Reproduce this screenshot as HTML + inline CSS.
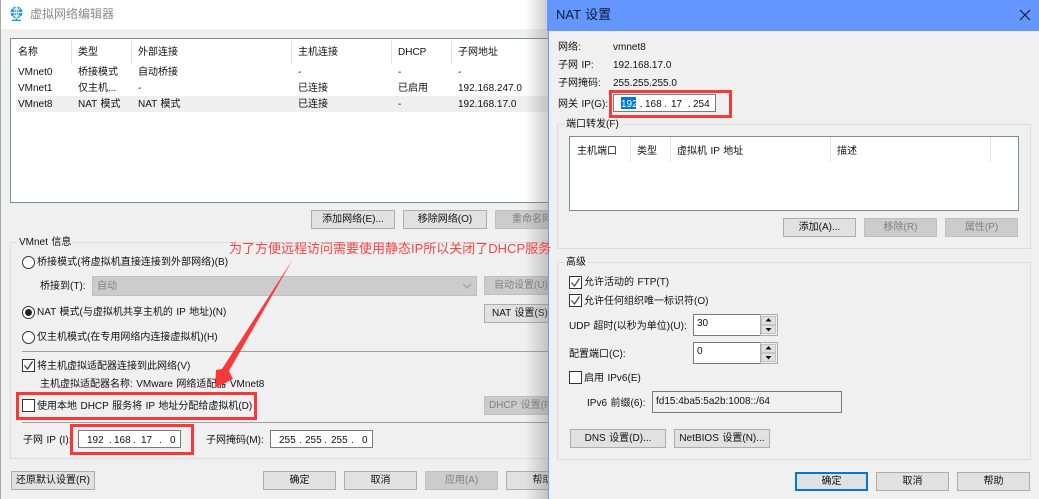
<!DOCTYPE html>
<html><head><meta charset="utf-8">
<style>
html,body{margin:0;padding:0;width:1039px;height:499px;overflow:hidden;background:#f0f0f0}
body{position:relative;font-family:"Liberation Sans","Noto Sans CJK SC",sans-serif;font-size:10px;color:#111;word-spacing:.7px}
#w{position:absolute;left:0;top:0;width:1039px;height:499px;filter:blur(.3px)}
div{position:absolute;box-sizing:border-box}
.t{white-space:nowrap;line-height:14px;height:14px;transform:translateY(-6px)}
.b{background:#e1e1e1;border:1px solid #adadad;text-align:center;white-space:nowrap;line-height:18px;height:19px}
.d{background:#ccc;border:1px solid #bfbfbf;color:#808080}
.i{background:#fff;border:1px solid #7a7a7a}
.c{width:13px;height:13px;background:#fff;border:1px solid #333}
.r{width:13px;height:13px;background:#fff;border:1px solid #333;border-radius:50%}
.o{border:3px solid #f63a3a}
.s{background:#a0a0a0;height:1px}
.gp{border:1px solid #dcdcdc}
.l{background:#f0f0f0;white-space:nowrap;line-height:14px;height:14px;padding:0 2px}
.v{width:1px;background:#e4e4e4}
</style></head><body><div id="w">

<!-- left dialog -->
<div style="left:0;top:0;width:548px;height:499px;background:#f0f0f0;border-left:1px solid #a8a8a8"></div>
<div style="left:1px;top:0;width:547px;height:29px;background:#fff"></div>
<svg style="position:absolute;left:9px;top:6px" width="15" height="15" viewBox="0 0 15 15">
<circle cx="7.5" cy="6.5" r="6" fill="#2e9bd6"/>
<path d="M1.5 6.5h12M7.5 .5v12M3.5 2.5q4 2 8 0M3.5 10.5q4-2 8 0M7.5 .5q-4 6 0 12M7.5 .5q4 6 0 12" stroke="#dff1fa" stroke-width=".9" fill="none"/>
<path d="M7.5 12.5v1.5M3 14.3h9" stroke="#3a9a8a" stroke-width="1.3"/>
</svg>
<div class="t" style="left:30px;top:13px;font-size:12px;color:#8a8a8a">虚拟网络编辑器</div>

<!-- table -->
<div style="left:10px;top:38px;width:540px;height:165px;background:#fff;border:1px solid #808a94"></div>
<div class="v" style="left:71px;top:40px;height:24px"></div>
<div class="v" style="left:131px;top:40px;height:24px"></div>
<div class="v" style="left:291px;top:40px;height:24px"></div>
<div class="v" style="left:391px;top:40px;height:24px"></div>
<div class="v" style="left:451px;top:40px;height:24px"></div>
<div style="left:16px;top:96px;width:532px;height:16px;background:#efefef"></div>
<div class="t" style="left:18px;top:52px">名称</div>
<div class="t" style="left:78px;top:52px">类型</div>
<div class="t" style="left:138px;top:52px">外部连接</div>
<div class="t" style="left:298px;top:52px">主机连接</div>
<div class="t" style="left:398px;top:52px">DHCP</div>
<div class="t" style="left:458px;top:52px">子网地址</div>

<div class="t" style="left:18px;top:72px">VMnet0</div>
<div class="t" style="left:78px;top:72px">桥接模式</div>
<div class="t" style="left:138px;top:72px">自动桥接</div>
<div class="t" style="left:298px;top:72px">-</div>
<div class="t" style="left:398px;top:72px">-</div>
<div class="t" style="left:458px;top:72px">-</div>

<div class="t" style="left:18px;top:88px">VMnet1</div>
<div class="t" style="left:78px;top:88px">仅主机...</div>
<div class="t" style="left:138px;top:88px">-</div>
<div class="t" style="left:298px;top:88px">已连接</div>
<div class="t" style="left:398px;top:88px">已启用</div>
<div class="t" style="left:458px;top:88px">192.168.247.0</div>

<div class="t" style="left:18px;top:104px">VMnet8</div>
<div class="t" style="left:78px;top:104px">NAT 模式</div>
<div class="t" style="left:138px;top:104px">NAT 模式</div>
<div class="t" style="left:298px;top:104px">已连接</div>
<div class="t" style="left:398px;top:104px">-</div>
<div class="t" style="left:458px;top:104px">192.168.17.0</div>

<div class="b" style="left:311px;top:210px;width:84px">添加网络(E)...</div>
<div class="b" style="left:403px;top:210px;width:84px">移除网络(O)</div>
<div class="b d" style="left:495px;top:210px;width:84px">重命名网络</div>

<!-- VMnet group -->
<div class="gp" style="left:10px;top:242px;width:560px;height:217px"></div>
<div class="l" style="left:17px;top:236px">VMnet 信息</div>

<div class="r" style="left:22px;top:256px"></div>
<div class="t" style="left:37px;top:262px;letter-spacing:.05px">桥接模式(将虚拟机直接连接到外部网络)(B)</div>
<div class="t" style="left:40px;top:286px">桥接到(T):</div>
<div style="left:92px;top:276px;width:385px;height:20px;background:#ccc;border:1px solid #bfbfbf"></div>
<div class="t" style="left:97px;top:286px;color:#808080">自动</div>
<svg style="position:absolute;left:462px;top:283px" width="10" height="6"><path d="M1 1l4 4 4-4" stroke="#999" fill="none"/></svg>
<div class="b d" style="left:484px;top:276px;width:84px;text-align:left;padding-left:9px">自动设置(U)</div>

<div class="r" style="left:22px;top:306px"></div>
<div style="left:25px;top:309px;width:7px;height:7px;border-radius:50%;background:#222"></div>
<div class="t" style="left:37px;top:312px">NAT 模式(与虚拟机共享主机的 IP 地址)(N)</div>
<div class="b" style="left:484px;top:304px;width:84px;text-align:left;padding-left:7px">NAT 设置(S)</div>

<div class="r" style="left:22px;top:331px"></div>
<div class="t" style="left:37px;top:337px">仅主机模式(在专用网络内连接虚拟机)(H)</div>

<div class="s" style="left:22px;top:351px;width:526px"></div>

<div class="c" style="left:22px;top:359px"></div>
<svg style="position:absolute;left:22px;top:359px" width="13" height="13"><path d="M2.5 6.5l3 3.5 5-7.5" stroke="#333" stroke-width="1.2" fill="none"/></svg>
<div class="t" style="left:37px;top:366px">将主机虚拟适配器连接到此网络(V)</div>
<div class="t" style="left:40px;top:384px">主机虚拟适配器名称: VMware 网络适配器 VMnet8</div>

<div class="c" style="left:22px;top:399px"></div>
<div class="t" style="left:37px;top:406px">使用本地 DHCP 服务将 IP 地址分配给虚拟机(D)</div>
<div class="b d" style="left:484px;top:396px;width:84px;text-align:left;padding-left:4px">DHCP 设置(P)</div>

<div class="s" style="left:22px;top:422px;width:526px"></div>

<div class="t" style="left:23px;top:440px">子网 IP (I):</div>
<div class="i" style="left:78px;top:430px;width:103px;height:18px"></div>
<div class="t" style="left:87px;top:440px">192</div>
<div class="t" style="left:109px;top:440px">.</div>
<div class="t" style="left:114px;top:440px">168</div>
<div class="t" style="left:133px;top:440px">.</div>
<div class="t" style="left:141px;top:440px">17</div>
<div class="t" style="left:159px;top:440px">.</div>
<div class="t" style="left:170px;top:440px">0</div>
<div class="t" style="left:206px;top:440px">子网掩码(M):</div>
<div class="i" style="left:270px;top:430px;width:103px;height:18px"></div>
<div class="t" style="left:279px;top:440px">255</div>
<div class="t" style="left:299px;top:440px">.</div>
<div class="t" style="left:305px;top:440px">255</div>
<div class="t" style="left:324px;top:440px">.</div>
<div class="t" style="left:331px;top:440px">255</div>
<div class="t" style="left:351px;top:440px">.</div>
<div class="t" style="left:362px;top:440px">0</div>

<div class="b" style="left:11px;top:471px;width:84px">还原默认设置(R)</div>
<div class="b" style="left:263px;top:471px;width:73px">确定</div>
<div class="b" style="left:344px;top:471px;width:73px">取消</div>
<div class="b d" style="left:425px;top:471px;width:73px">应用(A)</div>
<div class="b" style="left:506px;top:471px;width:73px">帮助</div>

<!-- shadow -->
<div style="left:525px;top:0;width:23px;height:499px;background:linear-gradient(to right,rgba(120,120,120,0),rgba(120,120,120,.38))"></div>

<!-- NAT dialog -->
<div style="left:548px;top:0;width:491px;height:499px;background:#f0f0f0;border-left:1px solid #6f9cf5"></div>
<div style="left:547px;top:0;width:492px;height:31px;background:#6496ff"></div>
<div class="t" style="left:556px;top:15px;font-size:13px;color:#0c1a33;line-height:16px;height:16px;transform:translateY(-8px)">NAT 设置</div>
<svg style="position:absolute;left:1019px;top:9px" width="12" height="12"><path d="M1 1l10 10M11 1L1 11" stroke="#101828" stroke-width="1.1"/></svg>

<div class="t" style="left:558px;top:47px">网络:</div><div class="t" style="left:613px;top:47px">vmnet8</div>
<div class="t" style="left:558px;top:65px">子网 IP:</div><div class="t" style="left:613px;top:65px">192.168.17.0</div>
<div class="t" style="left:558px;top:83px">子网掩码:</div><div class="t" style="left:613px;top:83px">255.255.255.0</div>
<div class="t" style="left:558px;top:104px">网关 IP(G):</div>
<div class="i" style="left:613px;top:94px;width:103px;height:18px"></div>
<div style="left:621px;top:97px;width:15px;height:12px;background:#0078d7"></div>
<div class="t" style="left:621px;top:104px;color:#fff">192</div>
<div class="t" style="left:640px;top:104px">.</div>
<div class="t" style="left:645px;top:104px">168</div>
<div class="t" style="left:664px;top:104px">.</div>
<div class="t" style="left:671px;top:104px">17</div>
<div class="t" style="left:688px;top:104px">.</div>
<div class="t" style="left:693px;top:104px">254</div>

<div class="gp" style="left:557px;top:124px;width:474px;height:125px"></div>
<div class="l" style="left:564px;top:118px">端口转发(F)</div>
<div style="left:569px;top:136px;width:450px;height:75px;background:#fff;border:1px solid #808a94"></div>
<div class="v" style="left:630px;top:137px;height:25px"></div>
<div class="v" style="left:670px;top:137px;height:25px"></div>
<div class="v" style="left:830px;top:137px;height:25px"></div>
<div class="v" style="left:990px;top:137px;height:25px"></div>
<div class="t" style="left:577px;top:151px">主机端口</div>
<div class="t" style="left:637px;top:151px">类型</div>
<div class="t" style="left:677px;top:151px">虚拟机 IP 地址</div>
<div class="t" style="left:837px;top:151px">描述</div>
<div class="b" style="left:783px;top:218px;width:73px">添加(A)...</div>
<div class="b d" style="left:864px;top:218px;width:73px">移除(R)</div>
<div class="b d" style="left:945px;top:218px;width:73px">属性(P)</div>

<div class="gp" style="left:557px;top:262px;width:474px;height:198px"></div>
<div class="l" style="left:564px;top:256px">高级</div>

<div class="c" style="left:569px;top:276px"></div>
<svg style="position:absolute;left:569px;top:276px" width="13" height="13"><path d="M2.5 6.5l3 3.5 5-7.5" stroke="#444" stroke-width="1.2" fill="none"/></svg>
<div class="t" style="left:584px;top:282px">允许活动的 FTP(T)</div>
<div class="c" style="left:569px;top:294px"></div>
<svg style="position:absolute;left:569px;top:294px" width="13" height="13"><path d="M2.5 6.5l3 3.5 5-7.5" stroke="#444" stroke-width="1.2" fill="none"/></svg>
<div class="t" style="left:584px;top:301px">允许任何组织唯一标识符(O)</div>

<div class="t" style="left:569px;top:326px">UDP 超时(以秒为单位)(U):</div>
<div class="i" style="left:693px;top:314px;width:68px;height:22px"></div>
<div style="left:760px;top:314px;width:18px;height:22px;background:#f0f0f0;border:1px solid #adadad"></div>
<div style="left:761px;top:316px;width:15px;height:9px;background:#e1e1e1;border:1px solid #c4c4c4"></div>
<div style="left:761px;top:325px;width:15px;height:9px;background:#e1e1e1;border:1px solid #c4c4c4"></div>
<svg style="position:absolute;left:765px;top:317px" width="7" height="16"><path d="M3.5 1L6.5 4.5H.5zM.5 11H6.5L3.5 14.5z" fill="#111"/></svg>
<div class="t" style="left:697px;top:323px">30</div>

<div class="t" style="left:569px;top:354px">配置端口(C):</div>
<div class="i" style="left:693px;top:342px;width:68px;height:22px"></div>
<div style="left:760px;top:342px;width:18px;height:22px;background:#f0f0f0;border:1px solid #adadad"></div>
<div style="left:761px;top:344px;width:15px;height:9px;background:#e1e1e1;border:1px solid #c4c4c4"></div>
<div style="left:761px;top:353px;width:15px;height:9px;background:#e1e1e1;border:1px solid #c4c4c4"></div>
<svg style="position:absolute;left:765px;top:345px" width="7" height="16"><path d="M3.5 1L6.5 4.5H.5zM.5 11H6.5L3.5 14.5z" fill="#111"/></svg>
<div class="t" style="left:697px;top:351px">0</div>

<div class="c" style="left:569px;top:371px"></div>
<div class="t" style="left:584px;top:378px">启用 IPv6(E)</div>
<div class="t" style="left:587px;top:403px">IPv6 前缀(6):</div>
<div style="left:652px;top:391px;width:190px;height:22px;background:#f0f0f0;border:1px solid #7a7a7a"></div>
<div class="t" style="left:656px;top:401px">fd15:4ba5:5a2b:1008::/64</div>
<div class="b" style="left:570px;top:429px;width:96px">DNS 设置(D)...</div>
<div class="b" style="left:674px;top:429px;width:96px">NetBIOS 设置(N)...</div>

<div class="b" style="left:795px;top:472px;width:73px;border:2px solid #0078d7;line-height:16px">确定</div>
<div class="b" style="left:876px;top:472px;width:73px">取消</div>
<div class="b" style="left:957px;top:472px;width:73px">帮助</div>

<!-- annotations -->
<div class="o" style="left:16px;top:392px;width:241px;height:28px"></div>
<div class="o" style="left:70px;top:424px;width:124px;height:31px"></div>
<div class="o" style="left:609px;top:90px;width:123px;height:28px"></div>
<svg style="position:absolute;left:0;top:0" width="1039" height="499"><polygon points="293,259 229,371 233,379 215,388 216,370 222,369" fill="#f63a3a"/></svg>
<div class="t" style="left:229px;top:248px;font-size:13px;color:#f64444;line-height:16px;height:16px;word-spacing:0;transform:translateY(-7px)">为了方便远程访问需要使用静态IP所以关闭了DHCP服务</div>
</div></body></html>
